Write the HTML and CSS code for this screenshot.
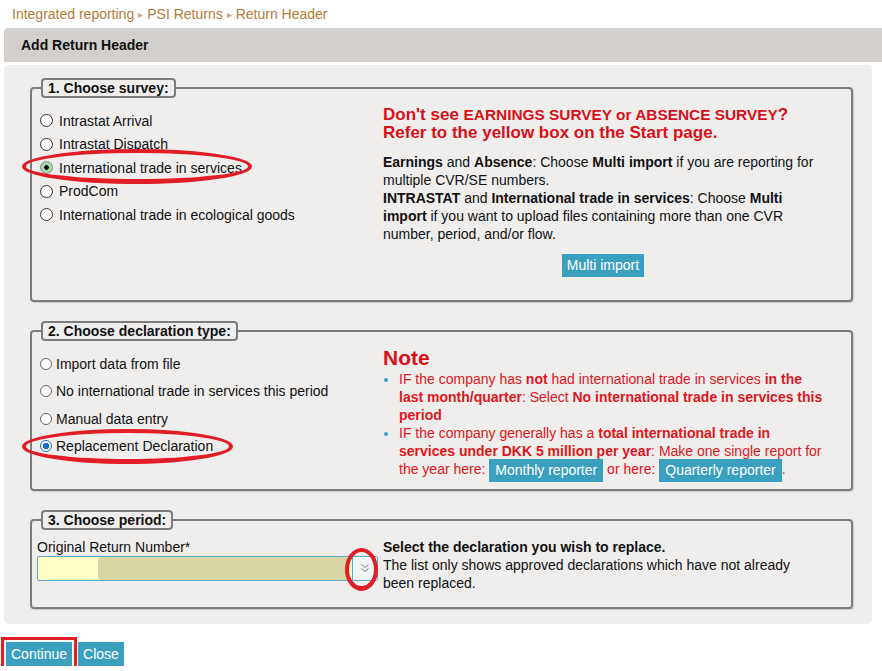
FILE: index.html
```html
<!DOCTYPE html>
<html lang="en">
<head>
    <meta charset="UTF-8">
    <title>Add Return Header</title>
    <link rel="stylesheet" href="styles.css">
</head>
<body>
    <div class="breadcrumb">
        <a href="#">Integrated reporting</a><span class="sep">&#9656;</span><a href="#">PSI Returns</a><span class="sep">&#9656;</span><a href="#">Return Header</a>
    </div>
    <div class="page-header">Add Return Header</div>

    <div class="panel">
        <fieldset class="fs fs-survey">
            <legend>1. Choose survey:</legend>
            <div class="fs-body">
                <div class="col-left">
                    <label class="opt"><input type="radio" name="survey" class="radio"> Intrastat Arrival</label>
                    <label class="opt"><input type="radio" name="survey" class="radio"> Intrastat Dispatch</label>
                    <label class="opt"><input type="radio" name="survey" class="radio" checked> International trade in services<span class="ring ring-survey"></span></label>
                    <label class="opt"><input type="radio" name="survey" class="radio"> ProdCom</label>
                    <label class="opt"><input type="radio" name="survey" class="radio"> International trade in ecological goods</label>
                </div>
                <div class="col-right">
                    <div class="warn">Don't see <span class="caps">EARNINGS SURVEY or ABSENCE SURVEY</span>?<br>Refer to the yellow box on the Start page.</div>
                    <p class="info">
                        <b>Earnings</b> and <b>Absence</b>: Choose <b>Multi import</b> if you are reporting for multiple CVR/SE numbers.<br>
                        <b>INTRASTAT</b> and <b>International trade in services</b>: Choose <b>Multi import</b> if you want to upload files containing more than one CVR number, period, and/or flow.
                    </p>
                    <div class="center"><a href="#" class="btn">Multi import</a></div>
                </div>
            </div>
        </fieldset>

        <fieldset class="fs fs-type">
            <legend>2. Choose declaration type:</legend>
            <div class="fs-body">
                <div class="col-left">
                    <label class="opt opt-small"><input type="radio" name="dtype" class="radio radio-small"> Import data from file</label>
                    <label class="opt opt-small"><input type="radio" name="dtype" class="radio radio-small"> No international trade in services this period</label>
                    <label class="opt opt-small"><input type="radio" name="dtype" class="radio radio-small"> Manual data entry</label>
                    <label class="opt opt-small"><input type="radio" name="dtype" class="radio radio-small" checked> Replacement Declaration<span class="ring ring-type"></span></label>
                </div>
                <div class="col-right">
                    <div class="note-title">Note</div>
                    <ul class="note-list">
                        <li>IF the company has <b>not</b> had international trade in services <b>in the last month/quarter</b>: Select <b>No international trade in services this period</b></li>
                        <li>IF the company generally has a <b>total international trade in services under DKK 5 million per year</b>: Make one single report for the year here: <a href="#" class="btn btn-inline">Monthly reporter</a> or here: <a href="#" class="btn btn-inline">Quarterly reporter</a>.</li>
                    </ul>
                </div>
            </div>
        </fieldset>

        <fieldset class="fs fs-period">
            <legend>3. Choose period:</legend>
            <div class="fs-body">
                <div class="col-left period-col">
                    <div class="field-label">Original Return Number*</div>
                    <div class="combo">
                        <div class="combo-fill"></div>
                        <div class="combo-btn">
                            <svg width="10" height="10" viewBox="0 0 10 10"><path d="M1.5 1.5 L5 4.5 L8.5 1.5 M1.5 5.5 L5 8.5 L8.5 5.5" fill="none" stroke="#777" stroke-width="1"/></svg>
                        </div>
                        <span class="ring ring-combo"></span>
                    </div>
                </div>
                <div class="col-right">
                    <b>Select the declaration you wish to replace.</b><br>
                    The list only shows approved declarations which have not already been replaced.
                </div>
            </div>
        </fieldset>
    </div>

    <div class="actions">
        <a href="#" class="btn btn-action btn-marked">Continue</a>
        <a href="#" class="btn btn-action">Close</a>
    </div>
</body>
</html>
```

FILE: styles.css
```css
body {
    margin: 0;
    font-family: "Liberation Sans", Arial, sans-serif;
    font-size: 14px;
    color: #111;
    background: #fff;
}

.breadcrumb {
    padding: 5px 12px 4px;
    font-size: 14px;
    line-height: 18px;
}

.breadcrumb a {
    color: #b27b3a;
    text-decoration: none;
}

.breadcrumb .sep {
    color: #c9a57e;
    font-size: 10px;
    margin: 0 4px;
    vertical-align: 1px;
}

.page-header {
    margin-left: 4px;
    height: 34px;
    line-height: 34px;
    padding-left: 17px;
    background: #d2cfcc;
    border-radius: 4px 0 0 0;
    font-size: 14px;
    font-weight: bold;
}

.panel {
    margin: 3px 10px 0 4px;
    padding: 13px 19px 15px 26px;
    background: #efeeed;
    border-radius: 5px;
}

.fs {
    margin: 0;
    padding: 8px 8px 23px;
    border: 2px solid #7c7c7c;
    border-radius: 4px;
    box-shadow: 1px 1px 1px rgba(0, 0, 0, 0.15);
    min-width: 0;
}

.fs + .fs {
    margin-top: 19px;
}

.fs legend {
    margin-left: 1px;
    padding: 0 5px;
    border: 2px solid #7c7c7c;
    border-radius: 4px;
    font-size: 14px;
    font-weight: bold;
    line-height: 16px;
}

.fs-body {
    display: flex;
}

.col-left {
    width: 343px;
    flex-shrink: 0;
}

.col-right {
    width: 440px;
    font-size: 14px;
    line-height: 18px;
}

/* radios */
.opt {
    position: relative;
    display: flex;
    align-items: center;
    height: 23.5px;
    font-size: 14px;
    white-space: nowrap;
}

.fs-survey .col-left {
    margin-top: 3px;
}

.radio {
    appearance: none;
    -webkit-appearance: none;
    margin: 0 6px 0 0;
    width: 13px;
    height: 13px;
    border: 1px solid #333;
    border-radius: 50%;
    background: #fff;
}

.radio:checked {
    border-color: #888;
    background: radial-gradient(circle, #000 0 2px, #a6d9ac 2.5px);
}

.opt-small {
    height: 27.5px;
}

.fs-type {
    padding-top: 5px;
    padding-bottom: 10px;
}

.fs-type .col-left {
    margin-top: 4px;
}

.radio-small {
    width: 12px;
    height: 12px;
    margin-right: 4px;
    border-color: #666;
}

.radio-small:checked {
    border-color: #1f6fd0;
    background: radial-gradient(circle, #1f6fd0 0 3px, #fff 3.5px);
}

/* hand drawn red rings */
.ring {
    position: absolute;
    border: 4px solid #e11d27;
    border-bottom-width: 5px;
    border-radius: 50%;
    pointer-events: none;
}

.ring-survey {
    left: -18px;
    top: -7px;
    width: 222px;
    height: 26px;
}

.ring-type {
    left: -18px;
    top: -4px;
    width: 203px;
    height: 26px;
}

.ring-combo {
    left: 307px;
    top: -9px;
    width: 25px;
    height: 34px;
}

/* right column texts */
.warn {
    color: #d8101a;
    font-size: 17px;
    font-weight: bold;
    line-height: 18px;
}

.warn .caps {
    font-size: 15.4px;
}

.info {
    margin: 11px 0 0;
}

.center {
    text-align: center;
    margin-top: 11px;
}

.btn {
    display: inline-block;
    background: #3b9fc0;
    color: #fff;
    font-size: 14px;
    line-height: 23px;
    padding: 0 5px;
    text-decoration: none;
}

.note-title {
    color: #d8101a;
    font-size: 21px;
    font-weight: bold;
    line-height: 24px;
}

.note-list {
    margin: 0;
    padding-left: 16px;
    color: #e0161c;
}

.note-list li::marker {
    color: #3b9fc0;
}

.btn-inline {
    margin: -3px 0;
    padding: 0 6px;
    vertical-align: middle;
}

/* period */
.fs-period {
    padding-bottom: 15px;
}

.period-col {
    margin-left: -3px;
    margin-right: 3px;
}

.field-label {
    line-height: 18px;
}

.combo {
    position: relative;
    display: flex;
    width: 339px;
    height: 23px;
    border: 1px solid #5aaec4;
    border-radius: 2px;
    background: #ffffc6;
}

.combo-fill {
    flex: 1;
    margin: 0 5px 0 60px;
    background: #d8d5a5;
    border-radius: 4px 0 0 4px;
}

.combo-btn {
    width: 24px;
    border-left: 1px solid #5aaec4;
    background: #f2f5f5;
    display: flex;
    align-items: center;
    justify-content: center;
}

/* bottom buttons */
.actions {
    display: flex;
    gap: 6px;
    margin: 18px 0 0 6px;
}

.btn-action {
    height: 24px;
    line-height: 24px;
    padding: 0 5px;
}

.btn-marked {
    outline: 3px solid #e11d27;
    outline-offset: 2px;
}
```
